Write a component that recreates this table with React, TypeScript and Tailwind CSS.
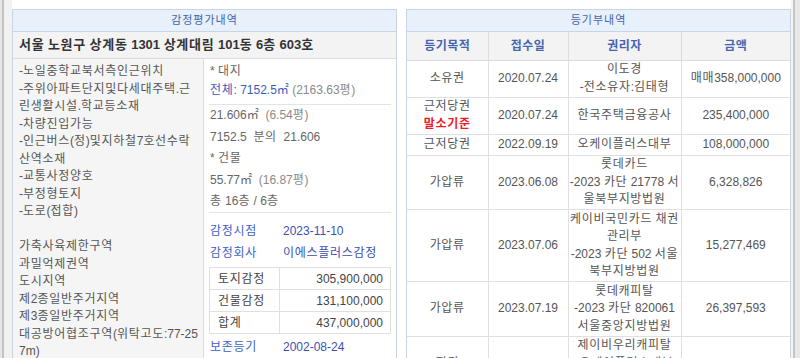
import { Fragment } from 'react';

// Hangul in Noto CJK runs a bit narrower than the reference font, so pad Hangul runs only
function K({ t }: { t: string }) {
  const parts = t.split(/([가-힣]+)/);
  return (
    <>
      {parts.map((p, i) =>
        /[가-힣]/.test(p) ? (
          <span key={i} className="tracking-[0.7px]">{p}</span>
        ) : (
          <Fragment key={i}>{p}</Fragment>
        )
      )}
    </>
  );
}

export default function App() {
  const leftNotes = [
    '-노일중학교북서측인근위치',
    '-주위아파트단지및다세대주택.근',
    '린생활시설.학교등소재',
    '-차량진입가능',
    '-인근버스(정)및지하철7호선수락',
    '산역소재',
    '-교통사정양호',
    '-부정형토지',
    '-도로(접합)',
    '',
    '가축사육제한구역',
    '과밀억제권역',
    '도시지역',
    '제2종일반주거지역',
    '제3종일반주거지역',
    '대공방어협조구역(위탁고도:77-25',
    '7m)',
  ];

  const appraisal = [
    ['토지감정', '305,900,000'],
    ['건물감정', '131,100,000'],
    ['합계', '437,000,000'],
  ];

  const registry = [
    { kind: ['소유권'], date: '2020.07.24', holder: ['이도경', '-전소유자:김태형'], amount: '매매358,000,000' },
    { kind: ['근저당권'], base: true, date: '2020.07.24', holder: ['한국주택금융공사'], amount: '235,400,000' },
    { kind: ['근저당권'], date: '2022.09.19', holder: ['오케이플러스대부'], amount: '108,000,000' },
    { kind: ['가압류'], date: '2023.06.08', holder: ['롯데카드', '-2023 카단 21778 서', '울북부지방법원'], amount: '6,328,826' },
    { kind: ['가압류'], date: '2023.07.06', holder: ['케이비국민카드 채권', '관리부', '-2023 카단 502 서울', '북부지방법원'], amount: '15,277,469' },
    { kind: ['가압류'], date: '2023.07.19', holder: ['롯데캐피탈', '-2023 카단 820061', '서울중앙지방법원'], amount: '26,397,593' },
    { kind: ['질권'], date: '2023.10.19', holder: ['제이비우리캐피탈', '-오케이플러스대부', '-질권자'], amount: '100,000,000' },
  ];

  return (
    <div className="flex w-[800px] h-[358px] overflow-hidden bg-white text-[12px] font-['Liberation_Sans','Noto_Sans_CJK_KR',sans-serif]">
      {/* left frame strip */}
      <div className="flex shrink-0 w-[12px]">
        <div className="w-[2px] bg-[#e6e6e6]" />
        <div className="w-[2px] bg-[#c3c3c3]" />
        <div className="w-[8px] bg-[#f1f1f1]" />
      </div>

      <div className="flex gap-[9px] pt-[9px]">
        {/* 감정평가내역 */}
        <div className="w-[385px] shrink-0 border border-[#c9d5e7] self-start">
          <div className="h-[22px] flex items-center justify-center bg-[#e8f0fc] border-b border-[#c9d5e7] text-[11px] tracking-[1px] text-[#4463a9]">
            감정평가내역
          </div>
          <div className="h-[27px] flex items-center px-[6px] bg-[#f3f3f3] border-b border-[#dcdcdc] text-[13px] font-bold text-[#333]">
            <span>
              <K t="서울 노원구 상계동 1301 상계대림 101동 6층 603호" />
            </span>
          </div>
          <div className="grid grid-cols-[191px_1fr]">
            <div className="bg-[#f5f5f5] border-r border-[#dcdcdc] pl-[6px] pt-[4px] leading-[17.5px] text-[#555]">
              {leftNotes.map((t, i) => (
                <div key={i} className="h-[17.5px] whitespace-nowrap">
                  <K t={t} />
                </div>
              ))}
            </div>
            <div className="px-[5px] text-[#666]">
              <div className="h-[46px] pt-[3px] pl-[1px] leading-[19px] border-b border-[#e4e4e4]">
                <div><K t="* 대지" /></div>
                <div>
                  <span className="text-[#3b5bbd]"><K t="전체: 7152.5㎡" /></span>
                  <span className="text-[#8a8a8a]"> (2163.63<K t="평" />)</span>
                </div>
              </div>
              <div className="h-[108px] pl-[1px] leading-[21.5px] border-b border-[#e4e4e4]">
                <div>21.606㎡ <span className="text-[#8a8a8a]">&nbsp;(6.54<K t="평" />)</span></div>
                <div>7152.5 &nbsp;<K t="분의" /> &nbsp;21.606</div>
                <div><K t="* 건물" /></div>
                <div>55.77㎡ <span className="text-[#8a8a8a]">&nbsp;(16.87<K t="평" />)</span></div>
                <div><K t="총 16층 / 6층" /></div>
              </div>
              <div className="pt-[7px] pl-[1px] leading-[22px]">
                <div className="flex">
                  <span className="w-[73px] text-[#3d5fc6]"><K t="감정시점" /></span>
                  <span className="text-[#3b4fb5]">2023-11-10</span>
                </div>
                <div className="flex">
                  <span className="w-[73px] text-[#3d5fc6]"><K t="감정회사" /></span>
                  <span className="text-[#3b4fb5]"><K t="이에스플러스감정" /></span>
                </div>
              </div>
              <table className="mt-[3px] w-full border-collapse text-[#444]">
                <tbody>
                  {appraisal.map(([k, v]) => (
                    <tr key={k} className="h-[22px]">
                      <td className="w-[70px] border border-[#e0e0e0] pl-[8px]"><K t={k} /></td>
                      <td className="border border-[#e0e0e0] pr-[7px] text-right">{v}</td>
                    </tr>
                  ))}
                </tbody>
              </table>
              <div className="flex pt-[2px] pl-[1px] leading-[22px]">
                <span className="w-[73px] text-[#3d5fc6]"><K t="보존등기" /></span>
                <span className="text-[#3b4fb5]">2002-08-24</span>
              </div>
            </div>
          </div>
        </div>

        {/* 등기부내역 */}
        <div className="w-[385px] shrink-0 border border-[#c9d5e7] self-start">
          <div className="h-[22px] flex items-center justify-center bg-[#e8f0fc] border-b border-[#c9d5e7] text-[11px] tracking-[1px] text-[#4463a9]">
            등기부내역
          </div>
          <table className="w-full border-collapse table-fixed text-center">
            <colgroup>
              <col className="w-[81px]" />
              <col className="w-[80px]" />
              <col className="w-[113px]" />
              <col />
            </colgroup>
            <thead>
              <tr className="h-[28px] bg-[#f3f3f3] text-[#4565b3]">
                <th className="border-r border-b border-[#dcdcdc] font-bold tracking-[0.5px]">등기목적</th>
                <th className="border-r border-b border-[#dcdcdc] font-bold tracking-[0.5px]">접수일</th>
                <th className="border-r border-b border-[#dcdcdc] font-bold tracking-[0.5px]">권리자</th>
                <th className="border-b border-[#dcdcdc] font-bold tracking-[0.5px]">금액</th>
              </tr>
            </thead>
            <tbody className="text-[#555] leading-[17.5px]">
              {registry.map((r, i) => (
                <tr key={i} className="h-[21px]">
                  <td className="border-r border-b border-[#e0e0e0] py-[0.5px]">
                    {r.kind.map((k) => (
                      <div key={k}><K t={k} /></div>
                    ))}
                    {r.base && <div className="text-[#ea1c24] font-bold"><K t="말소기준" /></div>}
                  </td>
                  <td className="border-r border-b border-[#e0e0e0]">{r.date}</td>
                  <td className="border-r border-b border-[#e0e0e0] py-[0.5px] whitespace-nowrap">
                    {r.holder.map((h) => (
                      <div key={h}><K t={h} /></div>
                    ))}
                  </td>
                  <td className="border-b border-[#e0e0e0]"><K t={r.amount} /></td>
                </tr>
              ))}
            </tbody>
          </table>
        </div>
      </div>

      {/* right frame strip */}
      <div className="flex shrink-0 w-[9px]">
        <div className="w-[2px] bg-[#f4f4f4]" />
        <div className="w-[2px] bg-[#c6c6c6]" />
        <div className="w-[5px] bg-[#e8e8e8]" />
      </div>
    </div>
  );
}
